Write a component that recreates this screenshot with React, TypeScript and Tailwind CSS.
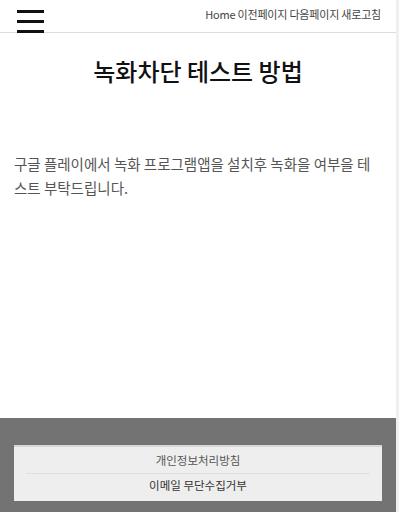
export default function App() {
  const font = { fontFamily: '"Noto Sans CJK KR", "Noto Sans", sans-serif' };
  return (
    <div className="flex w-[399px] h-[512px] bg-white overflow-hidden" style={font}>
      <div className="w-[396px] h-full flex flex-col">
        <header className="h-[33px] flex items-start justify-between border-b border-[#dddddd] shrink-0">
          <div className="ml-[17px] mt-[10px] w-[27px] flex flex-col gap-[7px]">
            <div className="h-[3px] bg-[#111]" />
            <div className="h-[3px] bg-[#111]" />
            <div className="h-[3px] bg-[#111]" />
          </div>
          <div className="mr-[15px] mt-[6px] text-[11px] leading-[16px] text-[#444] tracking-[-0.2px]">
            Home 이전페이지 다음페이지 새로고침
          </div>
        </header>
        <main className="flex-1 flex flex-col">
          <h1 className="mt-[21px] text-center text-[24px] leading-[34px] font-medium text-[#111]">
            녹화차단 테스트 방법
          </h1>
          <p className="mt-[64px] px-[14px] text-[14.5px] leading-[24px] text-[#555]">
            구글 플레이에서 녹화 프로그램앱을 설치후 녹화을 여부을 테스트 부탁드립니다.
          </p>
        </main>
        <footer className="h-[94px] shrink-0 bg-[#737373] pt-[27px] px-[14px]">
          <div className="bg-[#eeeeee] h-[56px] border-t-2 border-[#d8d8d8] flex flex-col items-center px-[12px]">
            <div className="w-full text-center text-[11.5px] leading-[26px] text-[#555] border-b border-[#dedede]">
              개인정보처리방침
            </div>
            <div className="w-full text-center text-[11.5px] leading-[22px] text-[#333]">
              이메일 무단수집거부
            </div>
          </div>
        </footer>
      </div>
      <div className="w-[3px] h-full bg-[#f0f0f0]" />
    </div>
  );
}
